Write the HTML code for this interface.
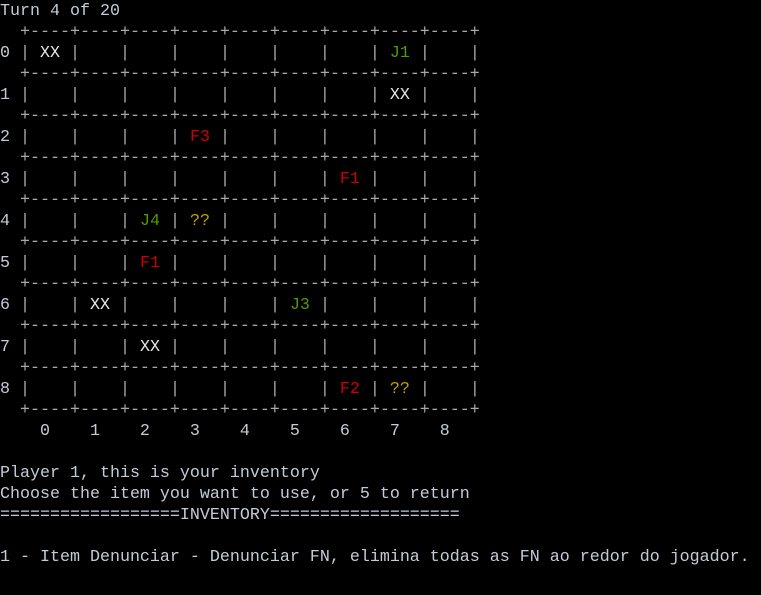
<!DOCTYPE html>
<html><head><meta charset="utf-8"><style>
html,body{margin:0;padding:0;background:#000;width:761px;height:595px;overflow:hidden}
pre{margin:0;padding:1px 0 0 0;font-family:"Liberation Mono","DejaVu Sans Mono",monospace;font-size:16.67px;line-height:21px;color:#c3ccd6;white-space:pre}
.g{color:#a8a8a8}.x{color:#e6e6e6}.j{color:#4e9a06}.f{color:#cc0000}.q{color:#c4a000}
</style></head><body><pre>Turn 4 of 20
<span class="g">  +----+----+----+----+----+----+----+----+----+</span>
0 <span class="g">|</span> <span class="x">XX</span> <span class="g">|</span>    <span class="g">|</span>    <span class="g">|</span>    <span class="g">|</span>    <span class="g">|</span>    <span class="g">|</span>    <span class="g">|</span> <span class="j">J1</span> <span class="g">|</span>    <span class="g">|</span>
<span class="g">  +----+----+----+----+----+----+----+----+----+</span>
1 <span class="g">|</span>    <span class="g">|</span>    <span class="g">|</span>    <span class="g">|</span>    <span class="g">|</span>    <span class="g">|</span>    <span class="g">|</span>    <span class="g">|</span> <span class="x">XX</span> <span class="g">|</span>    <span class="g">|</span>
<span class="g">  +----+----+----+----+----+----+----+----+----+</span>
2 <span class="g">|</span>    <span class="g">|</span>    <span class="g">|</span>    <span class="g">|</span> <span class="f">F3</span> <span class="g">|</span>    <span class="g">|</span>    <span class="g">|</span>    <span class="g">|</span>    <span class="g">|</span>    <span class="g">|</span>
<span class="g">  +----+----+----+----+----+----+----+----+----+</span>
3 <span class="g">|</span>    <span class="g">|</span>    <span class="g">|</span>    <span class="g">|</span>    <span class="g">|</span>    <span class="g">|</span>    <span class="g">|</span> <span class="f">F1</span> <span class="g">|</span>    <span class="g">|</span>    <span class="g">|</span>
<span class="g">  +----+----+----+----+----+----+----+----+----+</span>
4 <span class="g">|</span>    <span class="g">|</span>    <span class="g">|</span> <span class="j">J4</span> <span class="g">|</span> <span class="q">??</span> <span class="g">|</span>    <span class="g">|</span>    <span class="g">|</span>    <span class="g">|</span>    <span class="g">|</span>    <span class="g">|</span>
<span class="g">  +----+----+----+----+----+----+----+----+----+</span>
5 <span class="g">|</span>    <span class="g">|</span>    <span class="g">|</span> <span class="f">F1</span> <span class="g">|</span>    <span class="g">|</span>    <span class="g">|</span>    <span class="g">|</span>    <span class="g">|</span>    <span class="g">|</span>    <span class="g">|</span>
<span class="g">  +----+----+----+----+----+----+----+----+----+</span>
6 <span class="g">|</span>    <span class="g">|</span> <span class="x">XX</span> <span class="g">|</span>    <span class="g">|</span>    <span class="g">|</span>    <span class="g">|</span> <span class="j">J3</span> <span class="g">|</span>    <span class="g">|</span>    <span class="g">|</span>    <span class="g">|</span>
<span class="g">  +----+----+----+----+----+----+----+----+----+</span>
7 <span class="g">|</span>    <span class="g">|</span>    <span class="g">|</span> <span class="x">XX</span> <span class="g">|</span>    <span class="g">|</span>    <span class="g">|</span>    <span class="g">|</span>    <span class="g">|</span>    <span class="g">|</span>    <span class="g">|</span>
<span class="g">  +----+----+----+----+----+----+----+----+----+</span>
8 <span class="g">|</span>    <span class="g">|</span>    <span class="g">|</span>    <span class="g">|</span>    <span class="g">|</span>    <span class="g">|</span>    <span class="g">|</span> <span class="f">F2</span> <span class="g">|</span> <span class="q">??</span> <span class="g">|</span>    <span class="g">|</span>
<span class="g">  +----+----+----+----+----+----+----+----+----+</span>
    0    1    2    3    4    5    6    7    8

Player 1, this is your inventory
Choose the item you want to use, or 5 to return
==================INVENTORY===================

1 - Item Denunciar - Denunciar FN, elimina todas as FN ao redor do jogador.
</pre></body></html>
